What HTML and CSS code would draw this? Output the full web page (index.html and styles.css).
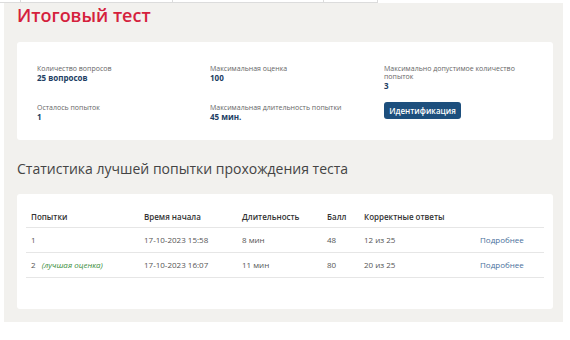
FILE: index.html
```html
<!DOCTYPE html>
<html lang="ru">
<head>
    <meta charset="UTF-8">
    <meta name="viewport" content="width=device-width, initial-scale=1.0">
    <title>Итоговый тест</title>
    <link rel="stylesheet" href="styles.css">
</head>
<body>
    <div class="top-strip">
        <span class="strip-cell w1"></span>
        <span class="strip-cell w2"></span>
        <span class="strip-cell w3"></span>
        <span class="strip-cell w4"></span>
    </div>

    <main class="panel">
        <h1 class="page-title">Итоговый тест</h1>

        <section class="card info-card">
            <div class="info-item">
                <p class="info-label">Количество вопросов</p>
                <p class="info-value">25 вопросов</p>
            </div>
            <div class="info-item">
                <p class="info-label">Максимальная оценка</p>
                <p class="info-value">100</p>
            </div>
            <div class="info-item">
                <p class="info-label">Максимально допустимое количество попыток</p>
                <p class="info-value">3</p>
            </div>
            <div class="info-item">
                <p class="info-label">Осталось попыток</p>
                <p class="info-value">1</p>
            </div>
            <div class="info-item">
                <p class="info-label">Максимальная длительность попытки</p>
                <p class="info-value">45 мин.</p>
            </div>
            <div class="info-item">
                <button class="ident-btn">Идентификация</button>
            </div>
        </section>

        <h2 class="section-title">Статистика лучшей попытки прохождения теста</h2>

        <section class="card stats-card">
            <table class="stats-table">
                <thead>
                    <tr>
                        <th class="c1">Попытки</th>
                        <th class="c2">Время начала</th>
                        <th class="c3">Длительность</th>
                        <th class="c4">Балл</th>
                        <th class="c5">Корректные ответы</th>
                        <th class="c6"></th>
                    </tr>
                </thead>
                <tbody>
                    <tr>
                        <td>1</td>
                        <td>17-10-2023 15:58</td>
                        <td>8 мин</td>
                        <td>48</td>
                        <td>12 из 25</td>
                        <td><a href="#" class="more-link">Подробнее</a></td>
                    </tr>
                    <tr>
                        <td>2 <span class="best-mark">(лучшая оценка)</span></td>
                        <td>17-10-2023 16:07</td>
                        <td>11 мин</td>
                        <td>80</td>
                        <td>20 из 25</td>
                        <td><a href="#" class="more-link">Подробнее</a></td>
                    </tr>
                </tbody>
            </table>
        </section>
    </main>
</body>
</html>
```

FILE: styles.css
```css
:root {
    --panel-bg: #f2f1ee;
    --title-red: #d5213c;
    --navy: #213d63;
    --btn-blue: #1d4f7d;
    --text-color: #555;
    --line: #e6e6e6;
}

* {
    margin: 0;
    padding: 0;
    box-sizing: border-box;
}

body {
    font-family: "Open Sans", "Noto Sans", sans-serif;
    background: #fff;
    color: var(--text-color);
}

/* обрывок таблицы над страницей */
.top-strip {
    display: flex;
    height: 3px;
    width: 378px;
    border-bottom: 1px solid #dcdcdc;
}

.strip-cell {
    border-right: 1px solid #dcdcdc;
}

.w1 { width: 21px; }
.w2 { width: 152px; }
.w3 { width: 151px; }
.w4 { width: 54px; }

.panel {
    margin-left: 4px;
    width: 559px;
    height: 319px;
    background: var(--panel-bg);
    padding: 1px 0 0 13px;
}

.page-title {
    font-size: 18px;
    line-height: 22px;
    font-weight: 600;
    color: var(--title-red);
    margin-bottom: 16px;
}

.card {
    width: 536px;
    background: #fff;
    border-radius: 3px;
}

.info-card {
    display: grid;
    grid-template-columns: 173px 174px 160px;
    grid-template-rows: 39px 32px;
    padding: 23px 16px 0 20px;
    height: 98px;
}

.info-label {
    font-size: 7px;
    line-height: 8px;
    color: #666;
}

.info-value {
    font-size: 8px;
    line-height: 10px;
    font-weight: 700;
    color: var(--navy);
}

.ident-btn {
    display: block;
    margin-top: -2px;
    width: 77px;
    height: 17px;
    background: var(--btn-blue);
    color: #fff;
    border: none;
    border-radius: 3px;
    font-family: inherit;
    font-size: 8px;
    font-weight: 600;
}

.section-title {
    font-size: 14px;
    line-height: 20px;
    font-weight: 400;
    color: #444;
    margin: 19px 0 15px;
}

.stats-card {
    height: 115px;
    padding: 12px 9px 0;
}

.stats-table {
    width: 518px;
    border-collapse: collapse;
    font-size: 8px;
}

.stats-table th {
    text-align: left;
    font-weight: 600;
    color: #333;
    height: 21px;
    padding: 0 5px;
    border-bottom: 1px solid var(--line);
}

.stats-table td {
    height: 25px;
    padding: 0 5px;
    border-bottom: 1px solid var(--line);
    color: var(--text-color);
}

.c1 { width: 113px; }
.c2 { width: 98px; }
.c3 { width: 85px; }
.c4 { width: 37px; }
.c5 { width: 116px; }

.best-mark {
    margin-left: 4px;
    font-style: italic;
    color: #3b8d3b;
}

.more-link {
    color: #4a6f9c;
    text-decoration: none;
}
```
